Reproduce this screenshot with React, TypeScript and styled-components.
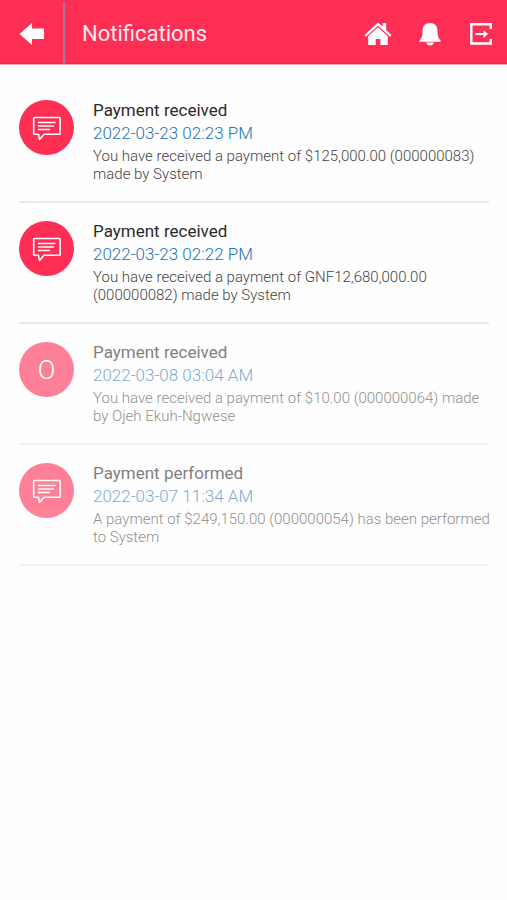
import React from "react";
import styled, { createGlobalStyle } from "styled-components";

const GlobalStyle = createGlobalStyle`
  *, *::before, *::after { box-sizing: border-box; }
  body {
    margin: 0;
    background: #fefefe;
    font-family: Roboto, "Liberation Sans", sans-serif;
  }
`;

const Header = styled.header`
  display: flex;
  align-items: stretch;
  height: 65px;
  background: #ff2e55;
  border-bottom: 1px solid #f9a3b3;
  box-shadow: inset 0 -1px 0 #ea2a4e;
  color: #fff;
`;

const IconButton = styled.button`
  display: flex;
  align-items: center;
  justify-content: center;
  padding: 4px 0 0;
  border: 0;
  background: none;
  color: inherit;
  cursor: pointer;
`;

const BackButton = styled(IconButton)`
  width: 65px;
  margin-top: 2px;
  padding: 2px 0 0;
  border-right: 2px solid #b070a0;
`;

const Title = styled.h1`
  flex: 1;
  margin: 0;
  padding: 2px 0 0 17px;
  color: #ffe9ee;
  font-size: 22px;
  font-weight: 400;
  line-height: 64px;
`;

const Actions = styled.nav`
  display: flex;
  gap: 26px;
  padding-right: 13px;
`;

const List = styled.ul`
  margin: 0;
  padding: 17px 18px 0 19px;
  list-style: none;
`;

const Item = styled.li<{ $read: boolean }>`
  display: flex;
  align-items: flex-start;
  gap: 19px;
  padding: 17px 0 18px;
  border-bottom: 2px solid ${(p) => (p.$read ? "#f2f2f2" : "#e8e8e8")};
`;

const Avatar = styled.div<{ $read: boolean }>`
  display: flex;
  flex: none;
  align-items: center;
  justify-content: center;
  width: 55px;
  height: 55px;
  margin-top: 1px;
  border-radius: 50%;
  background: #ff2e55;
  color: #fff;
  font-size: 26px;
  font-weight: 300;
  opacity: ${(p) => (p.$read ? 0.6 : 1)};
`;

const Content = styled.div<{ $read: boolean }>`
  flex: 1;
  min-width: 0;
  margin-right: -4px;
  opacity: ${(p) => (p.$read ? 0.6 : 1)};
`;

const Subject = styled.h2`
  margin: 0;
  color: #2a2a2a;
  font-size: 17px;
  font-weight: 400;
  line-height: 23px;
`;

const Timestamp = styled.time`
  display: block;
  color: #2474b8;
  font-size: 17px;
  font-weight: 300;
  line-height: 23px;
`;

const Message = styled.p`
  margin: 2px 0 0;
  color: #444;
  font-size: 15px;
  font-weight: 300;
  line-height: 18px;
`;

const BackIcon = () => (
  <svg width="26" height="24" viewBox="0 0 26 24" fill="currentColor" aria-hidden="true">
    <path d="M.500 12 13 1v5.500h12v10.500H13V23z" />
  </svg>
);

const HomeIcon = () => (
  <svg width="28" height="24" viewBox="0 0 28 24" fill="currentColor" aria-hidden="true">
    <path d="M14 .6 18.600 4.800V1h3.600v7.200l5.300 4.900-1.500 1.600L14 3.800 2 14.700.5 13.100z" />
    <path d="M14 5.200 23.800 14.200V23h-7.500v-6h-4.600v6H4.200v-8.800z" />
  </svg>
);

const BellIcon = () => (
  <svg width="24" height="24" viewBox="0 0 24 24" fill="currentColor" aria-hidden="true">
    <path d="M12 1c5 0 7.500 3.200 7.500 8 0 5 .8 7.200 3 9.300v1.500h-21v-1.500c2.200-2.100 3-4.300 3-9.300C4.500 4.200 7 1 12 1z" />
    <path d="M8 20.600h8c-.8 1.900-2.100 2.900-4 2.900s-3.200-1-4-2.900z" />
  </svg>
);

const ExitIcon = () => (
  <svg width="26" height="24" viewBox="0 0 26 24" fill="none" stroke="currentColor" strokeWidth="2.400" aria-hidden="true">
    <path d="M22.800 7V2.300H3.300v19.200h19.500V17" />
    <path d="M7.500 12H18" strokeWidth="2" />
    <path d="M15.500 8 20 12l-4.500 4z" fill="currentColor" stroke="none" />
  </svg>
);

const MessageIcon = () => (
  <svg width="30" height="26" viewBox="0 0 30 26" fill="none" stroke="currentColor" aria-hidden="true">
    <path d="M2.500 2.500h24.800q.8 0 .8.800v15.200q0 .8-.8.800H12L7.500 24.500 6.500 19.300h-4q-.8 0-.8-.8V3.300q0-.8.800-.8z" strokeWidth="1.600" strokeLinejoin="round" />
    <path d="M6 7.500h17.500M6 11h16M6 14.500h12" strokeWidth="1.600" />
  </svg>
);

interface Notification {
  subject: string;
  time: string;
  message: string;
  read: boolean;
  initial?: string;
}

const notifications: Notification[] = [
  {
    subject: "Payment received",
    time: "2022-03-23 02:23 PM",
    message: "You have received a payment of $125,000.00 (000000083) made by System",
    read: false,
  },
  {
    subject: "Payment received",
    time: "2022-03-23 02:22 PM",
    message: "You have received a payment of GNF12,680,000.00 (000000082) made by System",
    read: false,
  },
  {
    subject: "Payment received",
    time: "2022-03-08 03:04 AM",
    message: "You have received a payment of $10.00 (000000064) made by Ojeh Ekuh-Ngwese",
    read: true,
    initial: "O",
  },
  {
    subject: "Payment performed",
    time: "2022-03-07 11:34 AM",
    message: "A payment of $249,150.00 (000000054) has been performed to System",
    read: true,
  },
];

export default function App() {
  return (
    <>
      <GlobalStyle />
      <Header>
        <BackButton type="button" aria-label="Back">
          <BackIcon />
        </BackButton>
        <Title>Notifications</Title>
        <Actions>
          <IconButton type="button" aria-label="Home">
            <HomeIcon />
          </IconButton>
          <IconButton type="button" aria-label="Notifications">
            <BellIcon />
          </IconButton>
          <IconButton type="button" aria-label="Log out">
            <ExitIcon />
          </IconButton>
        </Actions>
      </Header>
      <main>
        <List>
          {notifications.map((n) => (
            <Item key={n.time} $read={n.read}>
              <Avatar $read={n.read}>{n.initial ?? <MessageIcon />}</Avatar>
              <Content $read={n.read}>
                <Subject>{n.subject}</Subject>
                <Timestamp>{n.time}</Timestamp>
                <Message>{n.message}</Message>
              </Content>
            </Item>
          ))}
        </List>
      </main>
    </>
  );
}
